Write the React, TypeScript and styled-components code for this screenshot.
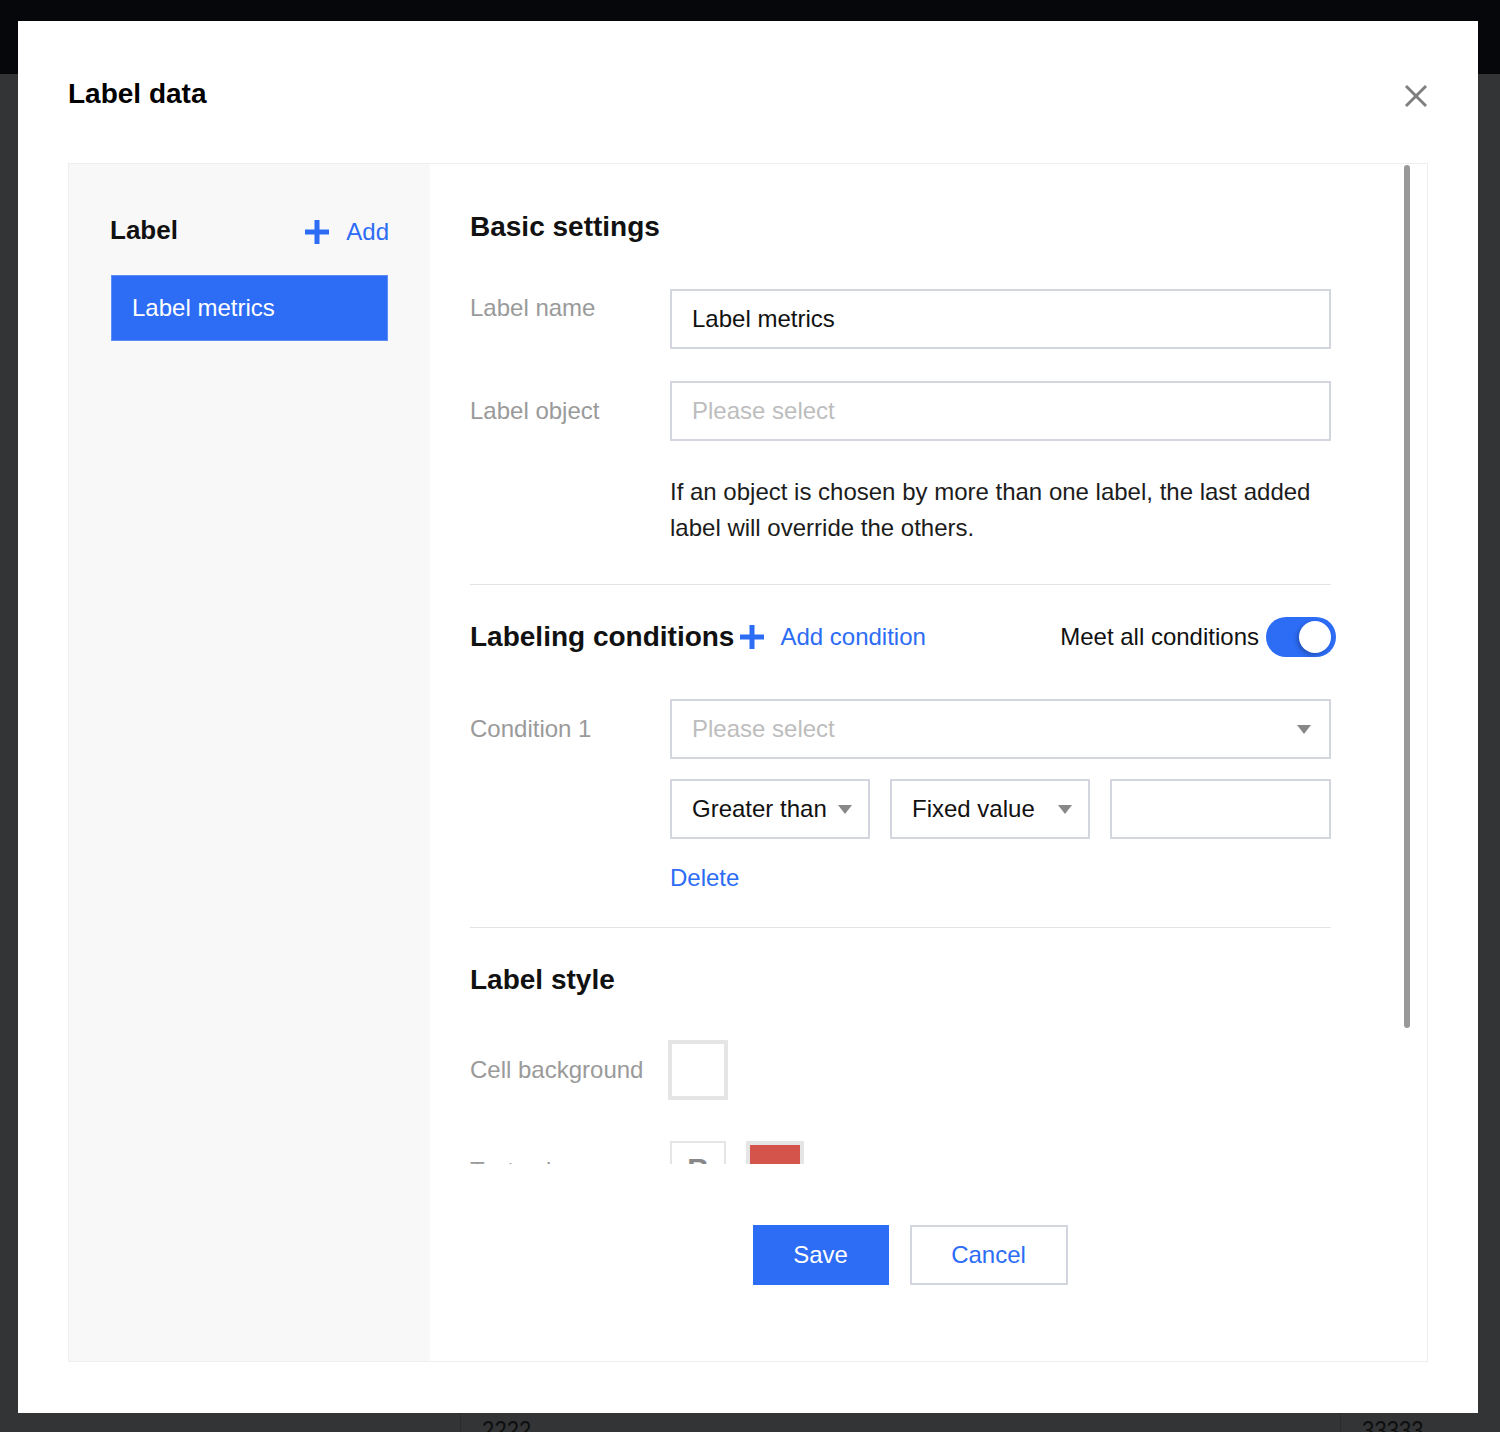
import React from "react";
import styled, { createGlobalStyle } from "styled-components";

const BLUE = "#2d6cf5";
const BORDER = "#d3d6df";

const GlobalStyle = createGlobalStyle`
    html, body {
        margin: 0;
        padding: 0;
    }
    body {
        font-family: "Liberation Sans", Arial, Helvetica, sans-serif;
        background: #333436;
    }
    * {
        box-sizing: border-box;
    }
`;

const Page = styled.div`
    position: relative;
    width: 1500px;
    height: 1432px;
    overflow: hidden;
    background: linear-gradient(#05070b 0, #05070b 74px, #333436 74px);
`;

const BgRow = styled.div`
    position: absolute;
    left: 0;
    right: 0;
    top: 1412px;
    height: 40px;
    display: grid;
    grid-template-columns: 460px 880px 160px;
    color: #0e0f10;
    font-size: 26px;
`;

const BgCell = styled.div<{ $line?: boolean }>`
    padding: 3px 0 0 25px;
    border-left: ${p => (p.$line ? "1px solid #2a2b2d" : "none")};
    transform: scaleX(0.85);
    transform-origin: left;
`;

const Modal = styled.div`
    position: absolute;
    left: 18px;
    top: 21px;
    width: 1460px;
    height: 1392px;
    background: #ffffff;
    display: flex;
    flex-direction: column;
`;

const Header = styled.div`
    height: 142px;
    padding: 0 50px;
    display: flex;
    align-items: center;
    justify-content: space-between;
`;

const Title = styled.h1`
    margin: 3px 0 0 0;
    font-size: 28px;
    font-weight: bold;
    color: #000;
`;

const CloseButton = styled.button`
    width: 30px;
    height: 30px;
    padding: 0;
    border: none;
    background: transparent;
    display: flex;
    align-items: center;
    justify-content: center;
    cursor: pointer;
    margin-right: -3px;
    margin-top: 8px;
`;

const Frame = styled.div`
    margin: 0 50px;
    height: 1199px;
    border: 1px solid #eeeeee;
    display: flex;
`;

const Sidebar = styled.div`
    width: 361px;
    background: #f8f8f8;
    padding: 42px 41px 0 41px;
`;

const SidebarHeader = styled.div`
    height: 48px;
    display: flex;
    align-items: center;
    justify-content: space-between;
`;

const SidebarTitle = styled.span`
    font-size: 26px;
    font-weight: bold;
    color: #111;
`;

const LinkButton = styled.span<{ $gap?: number; $drop?: number }>`
    display: inline-flex;
    align-items: center;
    gap: ${p => p.$gap ?? 17}px;
    margin-top: ${p => p.$drop ?? 0}px;
    color: ${BLUE};
    font-size: 24px;
    cursor: pointer;
`;

const SidebarItem = styled.div<{ $active?: boolean }>`
    margin: 21px 1px 0 1px;
    height: 66px;
    padding-left: 20px;
    display: flex;
    align-items: center;
    font-size: 24px;
    color: ${p => (p.$active ? "#fff" : "#111")};
    background: ${p => (p.$active ? BLUE : "transparent")};
    border: 1px solid ${p => (p.$active ? "#5d8ef7" : "transparent")};
`;

const Main = styled.div`
    position: relative;
    flex: 1;
    display: flex;
    flex-direction: column;
    background: #fff;
`;

const ScrollArea = styled.div`
    height: 1000px;
    overflow: hidden;
    padding: 0 96px 0 40px;
`;

const Scrollbar = styled.div`
    position: absolute;
    top: 1px;
    right: 17px;
    width: 6px;
    height: 863px;
    border-radius: 3px;
    background: #999999;
`;

const SectionTitle = styled.h2<{ $top: number }>`
    margin: ${p => p.$top}px 0 0 0;
    height: 40px;
    line-height: 40px;
    font-size: 28px;
    font-weight: bold;
    color: #111;
`;

const FormRow = styled.div<{ $top: number }>`
    margin-top: ${p => p.$top}px;
    display: flex;
    align-items: flex-start;
`;

const FieldLabel = styled.div<{ $shift?: number }>`
    width: 200px;
    flex: none;
    line-height: 60px;
    margin-top: ${p => p.$shift ?? 0}px;
    font-size: 24px;
    color: #9a9a9a;
    white-space: nowrap;
`;

const InputBox = styled.div<{ $width?: number; $placeholder?: boolean }>`
    position: relative;
    flex: ${p => (p.$width ? "none" : "1 0 auto")};
    width: ${p => (p.$width ? `${p.$width}px` : "auto")};
    height: 60px;
    padding: 0 20px;
    border: 2px solid ${BORDER};
    display: flex;
    align-items: center;
    font-size: 24px;
    color: ${p => (p.$placeholder ? "#bdbdbd" : "#111")};
    background: #fff;
`;

const Caret = styled.span<{ $right: number }>`
    position: absolute;
    right: ${p => p.$right}px;
    top: 50%;
    margin-top: -4px;
    width: 0;
    height: 0;
    border-left: 7px solid transparent;
    border-right: 7px solid transparent;
    border-top: 9px solid #888;
`;

const Fields = styled.div`
    flex: 1;
    display: flex;
    flex-direction: column;
`;

const InlineFields = styled.div`
    display: flex;
    gap: 20px;
    margin-top: 20px;
`;

const HelpText = styled.p`
    margin: 33px 0 0 200px;
    font-size: 24px;
    line-height: 36px;
    color: #1c1c1c;
`;

const Divider = styled.hr<{ $top: number }>`
    margin: ${p => p.$top}px 0 0 0;
    border: none;
    border-top: 1px solid #e3e3e3;
`;

const ConditionsHeader = styled.div`
    margin-top: 28px;
    height: 48px;
    display: flex;
    align-items: center;
`;

const HeaderTitle = styled.span`
    font-size: 28px;
    font-weight: bold;
    color: #111;
    margin-right: 6px;
`;

const Spacer = styled.div`
    flex: 1;
`;

const ToggleLabel = styled.span`
    font-size: 24px;
    color: #111;
    margin-right: 7px;
`;

const Toggle = styled.div<{ $on?: boolean }>`
    position: relative;
    width: 70px;
    height: 40px;
    border-radius: 20px;
    margin-right: -5px;
    background: ${p => (p.$on ? BLUE : "#ccc")};

    &::after {
        content: "";
        position: absolute;
        top: 4px;
        right: ${p => (p.$on ? "5px" : "33px")};
        width: 32px;
        height: 32px;
        border-radius: 50%;
        background: #fff;
        box-shadow: -2px 2px 4px rgba(0, 0, 0, 0.25);
    }
`;

const DeleteLink = styled.div`
    margin: 21px 0 0 200px;
    line-height: 36px;
    font-size: 24px;
    color: ${BLUE};
`;

const Swatch = styled.div<{ $color?: string; $width: number; $height: number; $border: number }>`
    width: ${p => p.$width}px;
    height: ${p => p.$height}px;
    border: ${p => p.$border}px solid #e5e5e5;
    background: ${p => p.$color ?? "#fff"};
    display: flex;
    align-items: center;
    justify-content: center;
    font-size: 30px;
    font-weight: bold;
    color: #888;
`;

const SwatchGroup = styled.div`
    display: flex;
    gap: 20px;
`;

const SwatchSlot = styled.div`
    margin-left: -2px;
`;

const Footer = styled.div`
    flex: 1;
    padding: 61px 77px 0 40px;
    display: flex;
    justify-content: center;
    align-items: flex-start;
    gap: 21px;
`;

const Button = styled.button<{ $primary?: boolean; $width: number }>`
    width: ${p => p.$width}px;
    height: 60px;
    font-family: inherit;
    font-size: 24px;
    cursor: pointer;
    color: ${p => (p.$primary ? "#fff" : BLUE)};
    background: ${p => (p.$primary ? BLUE : "#fff")};
    border: ${p => (p.$primary ? "none" : `2px solid ${BORDER}`)};
`;

const PlusIcon = () => (
    <svg width="24" height="24" viewBox="0 0 24 24">
        <rect x="9.5" y="0" width="5" height="24" fill={BLUE} />
        <rect x="0" y="9.5" width="24" height="5" fill={BLUE} />
    </svg>
);

const CloseIcon = () => (
    <svg width="24" height="24" viewBox="0 0 24 24">
        <path d="M2 2 L22 22 M22 2 L2 22" stroke="#808080" strokeWidth="3" />
    </svg>
);

export default function App() {
    return (
        <>
            <GlobalStyle />
            <Page>
                <BgRow>
                    <BgCell />
                    <BgCell $line>2222</BgCell>
                    <BgCell $line>33333</BgCell>
                </BgRow>
                <Modal>
                    <Header>
                        <Title>Label data</Title>
                        <CloseButton aria-label="Close">
                            <CloseIcon />
                        </CloseButton>
                    </Header>
                    <Frame>
                        <Sidebar>
                            <SidebarHeader>
                                <SidebarTitle>Label</SidebarTitle>
                                <LinkButton $drop={3}>
                                    <PlusIcon />
                                    Add
                                </LinkButton>
                            </SidebarHeader>
                            <SidebarItem $active>Label metrics</SidebarItem>
                        </Sidebar>
                        <Main>
                            <ScrollArea>
                                <SectionTitle $top={43}>Basic settings</SectionTitle>
                                <FormRow $top={42}>
                                    <FieldLabel $shift={-11}>Label name</FieldLabel>
                                    <InputBox>Label metrics</InputBox>
                                </FormRow>
                                <FormRow $top={32}>
                                    <FieldLabel>Label object</FieldLabel>
                                    <InputBox $placeholder>Please select</InputBox>
                                </FormRow>
                                <HelpText>
                                    If an object is chosen by more than one label, the last added label will
                                    override the others.
                                </HelpText>
                                <Divider $top={38} />
                                <ConditionsHeader>
                                    <HeaderTitle>Labeling conditions</HeaderTitle>
                                    <LinkButton $gap={16}>
                                        <PlusIcon />
                                        Add condition
                                    </LinkButton>
                                    <Spacer />
                                    <ToggleLabel>Meet all conditions</ToggleLabel>
                                    <Toggle $on />
                                </ConditionsHeader>
                                <FormRow $top={38}>
                                    <FieldLabel>Condition 1</FieldLabel>
                                    <Fields>
                                        <InputBox $placeholder>
                                            Please select
                                            <Caret $right={18} />
                                        </InputBox>
                                        <InlineFields>
                                            <InputBox $width={200}>
                                                Greater than
                                                <Caret $right={16} />
                                            </InputBox>
                                            <InputBox $width={200}>
                                                Fixed value
                                                <Caret $right={16} />
                                            </InputBox>
                                            <InputBox />
                                        </InlineFields>
                                    </Fields>
                                </FormRow>
                                <DeleteLink>Delete</DeleteLink>
                                <Divider $top={31} />
                                <SectionTitle $top={32}>Label style</SectionTitle>
                                <FormRow $top={40}>
                                    <FieldLabel>Cell background</FieldLabel>
                                    <SwatchSlot>
                                        <Swatch $width={60} $height={60} $border={4} />
                                    </SwatchSlot>
                                </FormRow>
                                <FormRow $top={41}>
                                    <FieldLabel>Text color</FieldLabel>
                                    <SwatchGroup>
                                        <Swatch $width={56} $height={56} $border={2}>
                                            B
                                        </Swatch>
                                        <Swatch $width={58} $height={56} $border={4} $color="#d4534b" />
                                    </SwatchGroup>
                                </FormRow>
                            </ScrollArea>
                            <Footer>
                                <Button $primary $width={136}>
                                    Save
                                </Button>
                                <Button $width={158}>Cancel</Button>
                            </Footer>
                            <Scrollbar />
                        </Main>
                    </Frame>
                </Modal>
            </Page>
        </>
    );
}
